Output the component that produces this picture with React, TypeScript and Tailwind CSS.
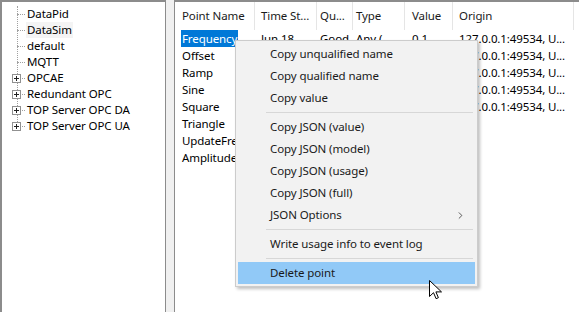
import { ChevronRight } from 'lucide-react';

const font = { fontFamily: '"Noto Sans", "Open Sans", sans-serif' };

const treeItems = [
  { label: 'DataPid', plus: false },
  { label: 'DataSim', plus: false, hover: true },
  { label: 'default', plus: false },
  { label: 'MQTT', plus: false },
  { label: 'OPCAE', plus: true },
  { label: 'Redundant OPC', plus: true },
  { label: 'TOP Server OPC DA', plus: true },
  { label: 'TOP Server OPC UA', plus: true },
];

const points = ['Frequency', 'Offset', 'Ramp', 'Sine', 'Square', 'Triangle', 'UpdateFrequency', 'Amplitude'];

function PlusBox() {
  return (
    <svg width="9" height="9" viewBox="0 0 9 9" className="absolute left-[10px] top-[4px]">
      <rect x="0.5" y="0.5" width="8" height="8" fill="white" stroke="#919191" />
      <path d="M2 4.5h5M4.5 2v5" stroke="#222" />
    </svg>
  );
}

function TreeRow({ label, plus, hover }: { label: string; plus: boolean; hover?: boolean }) {
  return (
    <div className="relative h-[16px] pl-[24px] flex items-center">
      <div className="absolute left-[15px] top-[8px] w-[8px] border-t border-dotted border-[#a0a0a0]" />
      {plus && <PlusBox />}
      <span className={`px-[1px] leading-[16px] ${hover ? 'bg-[#f4f4f4]' : ''}`}>{label}</span>
    </div>
  );
}

function MenuItem({ label, active, sub }: { label: string; active?: boolean; sub?: boolean }) {
  return (
    <div className={`h-[22px] flex items-center pl-[32px] pr-[9px] mx-[2px] ${active ? 'bg-[#91c9f7]' : ''}`}>
      <span className="flex-1">{label}</span>
      {sub && <ChevronRight size={11} strokeWidth={1.6} className="text-[#222]" />}
    </div>
  );
}

function Separator() {
  return (
    <div className="h-[7px] flex items-center pl-[30px] pr-[4px]">
      <div className="w-full border-t border-[#d7d7d7]" />
    </div>
  );
}

export default function App() {
  return (
    <div
      className="relative w-[579px] h-[312px] overflow-hidden bg-[#f0f0f0] text-[11.5px] tracking-[-0.1px] text-black flex"
      style={font}
    >
      {/* tree */}
      <div className="w-[166px] h-full bg-white border-l-2 border-t-2 border-r border-[#8c8c8c] pt-[4px]">
        <div className="relative">
          <div className="absolute left-[15px] top-0 h-[124px] border-l border-dotted border-[#a0a0a0]" />
          {treeItems.map((t) => (
            <TreeRow key={t.label} {...t} />
          ))}
        </div>
      </div>

      <div className="w-[8px] h-full" />

      {/* list view */}
      <div className="flex-1 h-full bg-white border-l border-t-2 border-[#8c8c8c]">
        <div className="h-[28px] flex items-center text-[#1a1a1a]">
          <div className="w-[80px] h-full flex items-center pl-[7px] border-r border-[#e5e5e5]">Point Name</div>
          <div className="w-[62px] h-full flex items-center pl-[6px] border-r border-[#e5e5e5]">Time St...</div>
          <div className="w-[36px] h-full flex items-center pl-[3px] border-r border-[#e5e5e5]">Qu...</div>
          <div className="w-[52px] h-full flex items-center pl-[3px] border-r border-[#e5e5e5]">Type</div>
          <div className="w-[48px] h-full flex items-center pl-[7px] border-r border-[#e5e5e5]">Value</div>
          <div className="w-[121px] h-full flex items-center pl-[6px] border-r border-[#e5e5e5]">Origin</div>
        </div>
        <div>
          {points.map((p, i) => (
            <div key={p} className="h-[17px] flex items-center whitespace-nowrap">
              <div className="w-[80px] pl-[6px]">
                <span className={i === 0 ? 'bg-[#0078d7] text-white px-[1px] py-[1px]' : 'px-[1px]'}>{p}</span>
              </div>
              {i < 5 && (
                <>
                  <div className="w-[62px] pl-[6px]">Jun 18</div>
                  <div className="w-[36px] pl-[3px]">Good</div>
                  <div className="w-[52px] pl-[3px]">Any (</div>
                  <div className="w-[48px] pl-[7px]">0.1</div>
                  <div className="w-[121px] pl-[6px]">127.0.0.1:49534, U...</div>
                </>
              )}
            </div>
          ))}
        </div>
      </div>

      {/* context menu */}
      <div className="absolute left-[235px] top-[40px] w-[243px] bg-[#f2f2f2] border border-[#cccccc] py-[2px] shadow-[2px_2px_3px_rgba(0,0,0,0.25)] text-[#1a1a1a]">
        <MenuItem label="Copy unqualified name" />
        <MenuItem label="Copy qualified name" />
        <MenuItem label="Copy value" />
        <Separator />
        <MenuItem label="Copy JSON (value)" />
        <MenuItem label="Copy JSON (model)" />
        <MenuItem label="Copy JSON (usage)" />
        <MenuItem label="Copy JSON (full)" />
        <MenuItem label="JSON Options" sub />
        <Separator />
        <MenuItem label="Write usage info to event log" />
        <Separator />
        <MenuItem label="Delete point" active />
      </div>

      {/* mouse cursor */}
      <svg width="13" height="20" viewBox="0 0 13 20" className="absolute left-[429px] top-[280px]">
        <path d="M0.5 0.5v16l4-3.8 2.6 6 2.3-1-2.5-5.8h5.6z" fill="white" stroke="black" strokeWidth="1" />
      </svg>
    </div>
  );
}
